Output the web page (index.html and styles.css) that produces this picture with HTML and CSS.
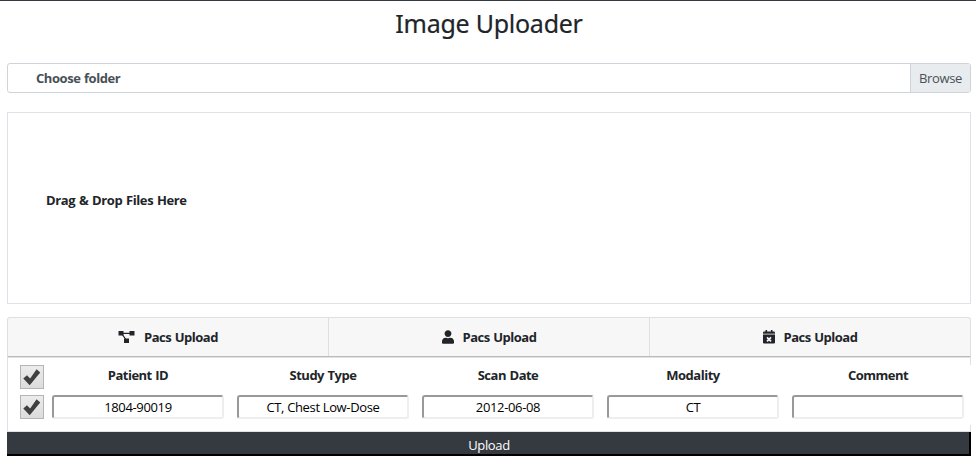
FILE: index.html
```html
<!DOCTYPE html>
<html lang="en">
<head>
<meta charset="utf-8">
<title>Image Uploader</title>
<link rel="stylesheet" href="styles.css">
</head>
<body>
<main class="page">
  <h1 class="title"><span>Image Uploader</span></h1>
  <div class="picker">
    <span class="picker-label">Choose folder</span>
    <span class="picker-browse">Browse</span>
  </div>
  <section class="dropzone"><span>Drag &amp; Drop Files Here</span></section>
  <nav class="tabs">
    <a class="tab">
      <svg class="icon wide" viewBox="0 0 17 14"><path d="M5 3.300h7M4 4l4.200 6" stroke="#212529" stroke-width="1.300" fill="none"/><path d="M.5 1h5v4.500h-5zM11.500 1h5v4.500h-5zM6 8.500h5V13H6z" fill="#212529"/></svg>
      <span>Pacs Upload</span>
    </a>
    <a class="tab">
      <svg class="icon" viewBox="0 0 448 512"><path fill="#212529" d="M224 256c70.700 0 128-57.300 128-128S294.700 0 224 0 96 57.300 96 128s57.300 128 128 128zm89.600 32h-16.700c-22.200 10.200-46.900 16-72.900 16s-50.600-5.800-72.900-16h-16.700C60.200 288 0 348.200 0 422.400V464c0 26.500 21.500 48 48 48h352c26.500 0 48-21.500 48-48v-41.600c0-74.200-60.200-134.400-134.400-134.400z"/></svg>
      <span>Pacs Upload</span>
    </a>
    <a class="tab">
      <svg class="icon" viewBox="0 0 12 14"><path fill="#212529" d="M2.500 0h1.600v1.600h3.800V0h1.600v1.600h1.300q1.200 0 1.200 1.200v1H0v-1q0-1.200 1.200-1.200h1.300zM0 5h12v7.500q0 1-1 1H1q-1 0-1-1z"/><path d="M0 4.400h12" stroke="#85888b" stroke-width="1.200"/><path d="M4 7.300l4 4M8 7.300l-4 4" stroke="#f7f7f7" stroke-width="1.700"/></svg>
      <span>Pacs Upload</span>
    </a>
  </nav>
  <section class="panel">
    <div class="studies">
      <span class="check"><svg viewBox="0 0 24 24"><path d="M2.500 13.500l4-3.500 3.500 3.500L17 3.500l4 3.700L9.500 21z"/></svg></span>
      <span class="head">Patient ID</span>
      <span class="head">Study Type</span>
      <span class="head">Scan Date</span>
      <span class="head">Modality</span>
      <span class="head">Comment</span>
      <span class="check"><svg viewBox="0 0 24 24"><path d="M2.500 13.500l4-3.500 3.500 3.500L17 3.500l4 3.700L9.500 21z"/></svg></span>
      <span class="field">1804-90019</span>
      <span class="field">CT, Chest Low-Dose</span>
      <span class="field">2012-06-08</span>
      <span class="field">CT</span>
      <span class="field"></span>
    </div>
  </section>
  <div class="upload"><span>Upload</span></div>
</main>
</body>
</html>
```
FILE: styles.css
```css
* { box-sizing: border-box; }
body {
  margin: 0;
  background: #fff;
  color: #212529;
  font: 13px/20px "Open Sans", "Noto Sans", sans-serif;
  letter-spacing: -0.35px;
  border-top: 1px solid #343a40;
}
.page { width: 964px; margin-left: 7px; }
.title {
  margin: 0;
  height: 62px;
  padding-top: 8px;
  text-align: center;
  font-family: "Noto Sans", sans-serif;
  font-size: 25px;
  line-height: 29px;
  font-weight: 400;
  letter-spacing: -0.25px;
  -webkit-text-stroke: 0.2px #212529;
}
.picker {
  display: flex;
  height: 30px;
  border: 1px solid #ced4da;
  border-radius: 3px;
  overflow: hidden;
  line-height: 28px;
}
.picker-label,
.dropzone,
.tab,
.head {
  font-weight: 700;
  letter-spacing: -0.5px;
  word-spacing: 0.7px;
}
.picker-label { flex: 1; padding-left: 28px; color: #495057; letter-spacing: -0.45px; }
.picker-browse {
  width: 60px;
  border-left: 1px solid #ced4da;
  background: #e9ecef;
  color: #495057;
  text-align: center;
}
.dropzone {
  display: flex;
  align-items: center;
  height: 192px;
  margin-top: 19px;
  padding: 0 0 16px 38px;
  border: 1px solid #dee2e6;
  letter-spacing: -0.38px;
}
.tabs {
  display: grid;
  grid-template-columns: 320px 321px 321px;
  height: 40px;
  margin-top: 13px;
  border: 1px solid #dfdfdf;
  border-bottom-color: #bbb;
  border-radius: 3px 3px 0 0;
  background: #f7f7f7;
  overflow: hidden;
}
.tab {
  display: flex;
  align-items: center;
  justify-content: center;
  gap: 9px;
}
.tab + .tab { border-left: 1px solid #dfdfdf; }
.icon { width: 12px; height: 14px; }
.icon.wide { width: 17px; }
.panel {
  height: 75px;
  border: 1px solid #dee2e6;
  padding-top: 7px;
}
.studies {
  display: grid;
  grid-template-columns: 19px repeat(5, 172px);
  grid-template-rows: 24px 24px;
  gap: 6px 13px;
  width: 963px;
  height: 60px;
  padding-left: 12px;
  background: #fff;
}
.check {
  width: 24px;
  height: 24px;
  border: 1px solid #b5b5b5;
  background: linear-gradient(#ececec, #dcdcdc);
}
.check svg { display: block; width: 22px; height: 22px; fill: #404040; }
.head { text-align: center; line-height: 21px; }
.field {
  height: 24px;
  border: 2px solid #eee;
  border-color: #999 #eee #eee #999;
  border-radius: 3px;
  color: #000;
  line-height: 20px;
  text-align: center;
}
.upload {
  height: 24px;
  border-right: 2px solid #000;
  border-bottom: 2px solid #000;
  background: #343a40;
  color: #fff;
  line-height: 26px;
  padding-left: 2px;
  text-align: center;
}
```
